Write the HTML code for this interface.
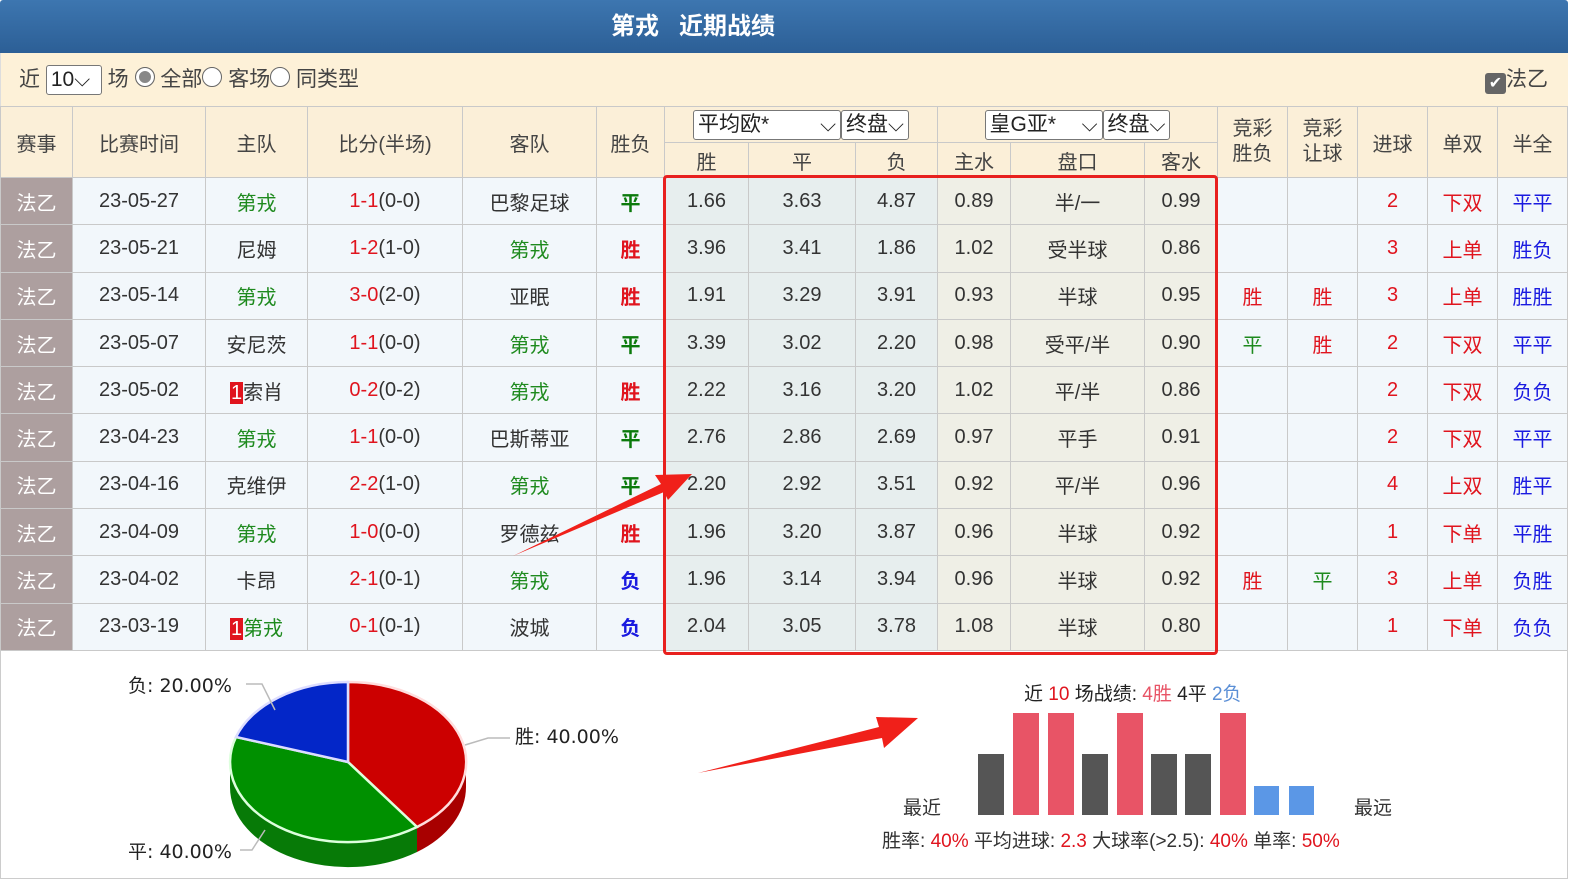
<!DOCTYPE html>
<html><head><meta charset="utf-8"><style>
*{margin:0;padding:0;box-sizing:border-box}
body{width:1594px;height:895px;background:#fff;font-family:"Liberation Sans","Noto Sans CJK SC",sans-serif;position:relative;overflow:hidden;color:#333}
.top{position:absolute;left:0;top:0;width:1568px;height:53px;background:linear-gradient(#3d76b0,#2c5f96);border-radius:3px 3px 0 0;color:#fff;font-weight:bold;font-size:24px;text-align:left;padding-left:611px;line-height:54px}
.filt{position:absolute;left:0;top:53px;width:1568px;height:53px;background:#fdf1d8;font-size:21px;line-height:53px;padding-left:18px;border-left:1px solid #ddd;color:#444}
.sel{display:inline-block;border:1px solid #777;border-radius:3px;background:#fff;height:30px;line-height:28px;padding:0 4px;vertical-align:middle;font-size:21px;color:#222}
.rad{display:inline-block;width:20px;height:20px;border:1px solid #666;border-radius:50%;vertical-align:-1px;background:#fff}
table{position:absolute;left:0;top:106px;border-collapse:collapse;table-layout:fixed;font-size:20px}
td,th{border:1px solid #c9c9c9;text-align:center;font-weight:normal;overflow:hidden;white-space:nowrap}
th{background:#fbefd8;color:#444}
tr.d td{height:47.3px;background:#f2f7fb}
tr.d td.lg{background:#ad9f9f;color:#fff}
tr.d td.o{background:#e7eeee}
tr.d td.a{background:#efefe6}
.g{color:#1e8a1e}.r{color:#e0141e}.b{color:#1a1ae0}
.bg{color:#0b7a0b;font-weight:bold}.br{color:#e0141e;font-weight:bold}.bb{color:#1a1ae0;font-weight:bold}
.one{background:#e0141e;color:#fff;padding:0 1px}
.box{position:absolute;left:663px;top:175px;width:555px;height:480px;border:3px solid #e8201e;border-radius:4px}
.lbl{position:absolute;font-size:19px;color:#222}
</style></head><body>
<div class="top">第戎 &nbsp;&nbsp;近期战绩</div>
<div class="filt">近 <span class="sel" style="width:56px">10⌵</span> 场 <span class="rad" style="background:#888;box-shadow:inset 0 0 0 3px #fff"></span> 全部<span class="rad"></span> 客场<span class="rad"></span> 同类型
<span style="position:absolute;right:20px;top:0"><span style="display:inline-block;width:21px;height:21px;background:#666;border-radius:3px;color:#fff;font-size:16px;line-height:21px;text-align:center;vertical-align:-2px">✔</span>法乙</span></div>
<table>
<colgroup><col style="width:72px"><col style="width:133px"><col style="width:102px"><col style="width:155px"><col style="width:134px"><col style="width:68px"><col style="width:84px"><col style="width:107px"><col style="width:82px"><col style="width:73px"><col style="width:134px"><col style="width:73px"><col style="width:70px"><col style="width:70px"><col style="width:70px"><col style="width:70px"><col style="width:70px"></colgroup>
<tr style="height:36px"><th rowspan="2">赛事</th><th rowspan="2">比赛时间</th><th rowspan="2">主队</th><th rowspan="2">比分(半场)</th><th rowspan="2">客队</th><th rowspan="2">胜负</th>
<th colspan="3"><span class="sel" style="width:148px;text-align:left">平均欧* <span style="float:right">⌵</span></span><span class="sel">终盘⌵</span></th>
<th colspan="3"><span class="sel" style="width:118px;text-align:left">皇G亚* <span style="float:right">⌵</span></span><span class="sel">终盘⌵</span></th>
<th rowspan="2" style="line-height:25px">竞彩<br>胜负</th><th rowspan="2" style="line-height:25px">竞彩<br>让球</th><th rowspan="2">进球</th><th rowspan="2">单双</th><th rowspan="2">半全</th></tr>
<tr style="height:35px"><th>胜</th><th>平</th><th>负</th><th>主水</th><th>盘口</th><th>客水</th></tr>
<tr class="d"><td class="lg">法乙</td><td>23-05-27</td><td class="g">第戎</td><td><span class="r">1-1</span>(0-0)</td><td>巴黎足球</td><td class="bg">平</td><td class="o">1.66</td><td class="o">3.63</td><td class="o">4.87</td><td class="a">0.89</td><td class="a">半/一</td><td class="a">0.99</td><td></td><td></td><td class="r">2</td><td class="r">下双</td><td class="b">平平</td></tr>
<tr class="d"><td class="lg">法乙</td><td>23-05-21</td><td>尼姆</td><td><span class="r">1-2</span>(1-0)</td><td class="g">第戎</td><td class="br">胜</td><td class="o">3.96</td><td class="o">3.41</td><td class="o">1.86</td><td class="a">1.02</td><td class="a">受半球</td><td class="a">0.86</td><td></td><td></td><td class="r">3</td><td class="r">上单</td><td class="b">胜负</td></tr>
<tr class="d"><td class="lg">法乙</td><td>23-05-14</td><td class="g">第戎</td><td><span class="r">3-0</span>(2-0)</td><td>亚眠</td><td class="br">胜</td><td class="o">1.91</td><td class="o">3.29</td><td class="o">3.91</td><td class="a">0.93</td><td class="a">半球</td><td class="a">0.95</td><td class="r">胜</td><td class="r">胜</td><td class="r">3</td><td class="r">上单</td><td class="b">胜胜</td></tr>
<tr class="d"><td class="lg">法乙</td><td>23-05-07</td><td>安尼茨</td><td><span class="r">1-1</span>(0-0)</td><td class="g">第戎</td><td class="bg">平</td><td class="o">3.39</td><td class="o">3.02</td><td class="o">2.20</td><td class="a">0.98</td><td class="a">受平/半</td><td class="a">0.90</td><td class="g">平</td><td class="r">胜</td><td class="r">2</td><td class="r">下双</td><td class="b">平平</td></tr>
<tr class="d"><td class="lg">法乙</td><td>23-05-02</td><td><span class="one">1</span>索肖</td><td><span class="r">0-2</span>(0-2)</td><td class="g">第戎</td><td class="br">胜</td><td class="o">2.22</td><td class="o">3.16</td><td class="o">3.20</td><td class="a">1.02</td><td class="a">平/半</td><td class="a">0.86</td><td></td><td></td><td class="r">2</td><td class="r">下双</td><td class="b">负负</td></tr>
<tr class="d"><td class="lg">法乙</td><td>23-04-23</td><td class="g">第戎</td><td><span class="r">1-1</span>(0-0)</td><td>巴斯蒂亚</td><td class="bg">平</td><td class="o">2.76</td><td class="o">2.86</td><td class="o">2.69</td><td class="a">0.97</td><td class="a">平手</td><td class="a">0.91</td><td></td><td></td><td class="r">2</td><td class="r">下双</td><td class="b">平平</td></tr>
<tr class="d"><td class="lg">法乙</td><td>23-04-16</td><td>克维伊</td><td><span class="r">2-2</span>(1-0)</td><td class="g">第戎</td><td class="bg">平</td><td class="o">2.20</td><td class="o">2.92</td><td class="o">3.51</td><td class="a">0.92</td><td class="a">平/半</td><td class="a">0.96</td><td></td><td></td><td class="r">4</td><td class="r">上双</td><td class="b">胜平</td></tr>
<tr class="d"><td class="lg">法乙</td><td>23-04-09</td><td class="g">第戎</td><td><span class="r">1-0</span>(0-0)</td><td>罗德兹</td><td class="br">胜</td><td class="o">1.96</td><td class="o">3.20</td><td class="o">3.87</td><td class="a">0.96</td><td class="a">半球</td><td class="a">0.92</td><td></td><td></td><td class="r">1</td><td class="r">下单</td><td class="b">平胜</td></tr>
<tr class="d"><td class="lg">法乙</td><td>23-04-02</td><td>卡昂</td><td><span class="r">2-1</span>(0-1)</td><td class="g">第戎</td><td class="bb">负</td><td class="o">1.96</td><td class="o">3.14</td><td class="o">3.94</td><td class="a">0.96</td><td class="a">半球</td><td class="a">0.92</td><td class="r">胜</td><td class="g">平</td><td class="r">3</td><td class="r">上单</td><td class="b">负胜</td></tr>
<tr class="d"><td class="lg">法乙</td><td>23-03-19</td><td><span class="one">1</span><span class="g">第戎</span></td><td><span class="r">0-1</span>(0-1)</td><td>波城</td><td class="bb">负</td><td class="o">2.04</td><td class="o">3.05</td><td class="o">3.78</td><td class="a">1.08</td><td class="a">半球</td><td class="a">0.80</td><td></td><td></td><td class="r">1</td><td class="r">下单</td><td class="b">负负</td></tr>
</table>
<div class="box"></div>
<div style="position:absolute;left:0;top:650px;width:1568px;height:229px;border:1px solid #ccc;border-top:none"></div>
<svg style="position:absolute;left:0;top:0" width="1594" height="895">
<path d="M230,762 L230,787 A118,80 0 0 0 417,852 L417,827 A118,80 0 0 1 230,762Z" fill="#077a07"/>
<path d="M417,827 L417,852 A118,80 0 0 0 466,787 L466,762 A118,80 0 0 1 417,827Z" fill="#a80000"/>
<path d="M348,762 L348,682 A118,80 0 0 1 417,827Z" fill="#cc0000" stroke="#fdd" stroke-width="2.5"/>
<path d="M348,762 L417,827 A118,80 0 0 1 236,737Z" fill="#009000" stroke="#dfd" stroke-width="2.5"/>
<path d="M348,762 L236,737 A118,80 0 0 1 348,682Z" fill="#0326c8" stroke="#ddf" stroke-width="2.5"/>
<path d="M246,684 L262,684 L275,710" stroke="#bbb" fill="none" stroke-width="1.5"/>
<path d="M465,745 L488,738 L510,738" stroke="#bbb" fill="none" stroke-width="1.5"/>
<path d="M240,850 L252,850 L265,830" stroke="#bbb" fill="none" stroke-width="1.5"/>
<text x="128" y="692" font-size="19" fill="#222" font-family="DejaVu Sans,Noto Sans CJK SC,sans-serif">负: 20.00%</text>
<text x="515" y="743" font-size="19" fill="#222" font-family="DejaVu Sans,Noto Sans CJK SC,sans-serif">胜: 40.00%</text>
<text x="128" y="858" font-size="19" fill="#222" font-family="DejaVu Sans,Noto Sans CJK SC,sans-serif">平: 40.00%</text>
<polygon points="513,556 661,484 655,475 692,474 668,500 664,492" fill="#f0201a"/>
<polygon points="698,773 879,727 876,717 918,718 884,748 882,738" fill="#f0201a"/>
<g>
<rect x="978" y="754" width="26" height="61" fill="#555"/>
<rect x="1013" y="713" width="26" height="102" fill="#e85466"/>
<rect x="1048" y="713" width="26" height="102" fill="#e85466"/>
<rect x="1082" y="754" width="26" height="61" fill="#555"/>
<rect x="1117" y="713" width="26" height="102" fill="#e85466"/>
<rect x="1151" y="754" width="26" height="61" fill="#555"/>
<rect x="1185" y="754" width="26" height="61" fill="#555"/>
<rect x="1220" y="713" width="26" height="102" fill="#e85466"/>
<rect x="1254" y="786" width="25" height="29" fill="#5b97e6"/>
<rect x="1289" y="786" width="25" height="29" fill="#5b97e6"/>
</g>
</svg>
<div class="lbl" style="left:1024px;top:679px">近 <span class="r">10</span> 场战绩: <span style="color:#e85466">4胜</span> 4平 <span style="color:#5b8fd6">2负</span></div>
<div class="lbl" style="left:903px;top:793px;color:#333">最近</div>
<div class="lbl" style="left:1354px;top:793px;color:#333">最远</div>
<div class="lbl" style="left:882px;top:826px;color:#333">胜率: <span class="r">40%</span> 平均进球: <span class="r">2.3</span> 大球率(&gt;2.5): <span class="r">40%</span> 单率: <span class="r">50%</span></div>
</body></html>
